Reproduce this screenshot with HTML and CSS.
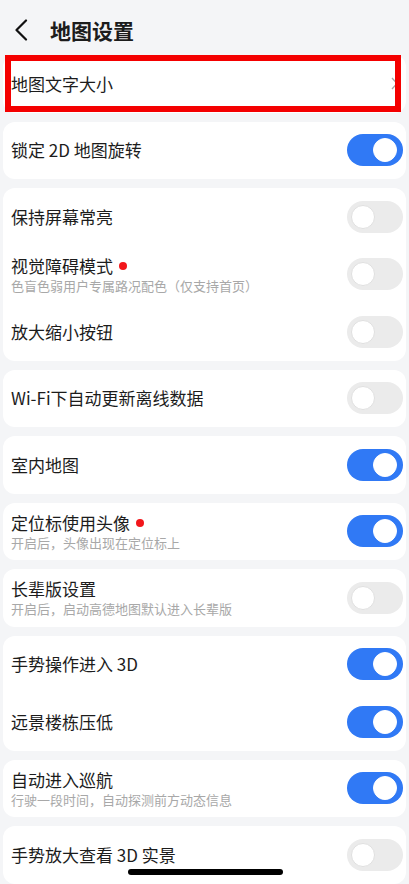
FILE: index.html
```html
<!DOCTYPE html>
<html lang="zh-CN">
<head>
    <meta charset="UTF-8">
    <meta name="viewport" content="width=device-width, initial-scale=1.0">
    <title>地图设置</title>
    <link rel="stylesheet" href="styles.css">
</head>
<body>

    <header class="topbar">
        <svg class="back" width="16" height="22" viewBox="0 0 16 22">
            <path d="M13 1.5 L3.5 11 L13 20.5" fill="none" stroke="#111" stroke-width="2.2" stroke-linecap="round" stroke-linejoin="round"/>
        </svg>
        <h1>地图设置</h1>
    </header>

    <div class="list">
        <div class="card marked">
            <div class="row">
                <span class="title">地图文字大小</span>
                <svg class="chevron" width="7" height="13" viewBox="0 0 7 13">
                    <path d="M1 1 L6 6.5 L1 12" fill="none" stroke="#a6a6a6" stroke-width="1.3"/>
                </svg>
            </div>
            <div class="mark"></div>
        </div>

        <div class="card">
            <div class="row">
                <span class="title">锁定 2D 地图旋转</span>
                <span class="switch on"></span>
            </div>
        </div>

        <div class="card">
            <div class="row">
                <span class="title">保持屏幕常亮</span>
                <span class="switch"></span>
            </div>
            <div class="row">
                <div class="text">
                    <span class="title">视觉障碍模式<i class="dot"></i></span>
                    <span class="sub">色盲色弱用户专属路况配色（仅支持首页）</span>
                </div>
                <span class="switch"></span>
            </div>
            <div class="row">
                <span class="title">放大缩小按钮</span>
                <span class="switch"></span>
            </div>
        </div>

        <div class="card">
            <div class="row">
                <span class="title">Wi-Fi下自动更新离线数据</span>
                <span class="switch"></span>
            </div>
        </div>

        <div class="card">
            <div class="row">
                <span class="title">室内地图</span>
                <span class="switch on"></span>
            </div>
        </div>

        <div class="card">
            <div class="row">
                <div class="text">
                    <span class="title">定位标使用头像<i class="dot"></i></span>
                    <span class="sub">开启后，头像出现在定位标上</span>
                </div>
                <span class="switch on"></span>
            </div>
        </div>

        <div class="card">
            <div class="row">
                <div class="text">
                    <span class="title">长辈版设置</span>
                    <span class="sub">开启后，启动高德地图默认进入长辈版</span>
                </div>
                <span class="switch"></span>
            </div>
        </div>

        <div class="card">
            <div class="row">
                <span class="title">手势操作进入 3D</span>
                <span class="switch on"></span>
            </div>
            <div class="row">
                <span class="title">远景楼栋压低</span>
                <span class="switch on"></span>
            </div>
        </div>

        <div class="card">
            <div class="row">
                <div class="text">
                    <span class="title">自动进入巡航</span>
                    <span class="sub">行驶一段时间，自动探测前方动态信息</span>
                </div>
                <span class="switch on"></span>
            </div>
        </div>

        <div class="card">
            <div class="row">
                <span class="title">手势放大查看 3D 实景</span>
                <span class="switch"></span>
            </div>
        </div>
    </div>

    <div class="home-bar"></div>

</body>
</html>
```

FILE: styles.css
```css
body {
    margin: 0;
    background-color: #f4f5f7;
    font-family: "Noto Sans CJK SC", "Noto Sans", sans-serif;
    color: #1c1c1c;
    height: 884px;
    overflow: hidden;
}
.topbar {
    height: 55px;
    display: flex;
    align-items: center;
    padding-left: 13px;
    box-sizing: border-box;
    padding-top: 4px;
}
.topbar h1 {
    margin: 0 0 0 21px;
    font-size: 21px;
    font-weight: 700;
    line-height: 28px;
}
.list {
    display: flex;
    flex-direction: column;
    gap: 9px;
}
.card {
    background: #fff;
    margin: 0 3px;
    border-radius: 12px;
}
.row {
    height: 57.5px;
    display: flex;
    align-items: center;
    justify-content: space-between;
    padding: 0 3px 0 8px;
}
.text {
    display: flex;
    flex-direction: column;
}
.title {
    font-size: 17px;
    line-height: 22px;
    display: flex;
    align-items: center;
}
.sub {
    font-size: 13px;
    line-height: 17px;
    color: #a8a8a8;
}
.dot {
    width: 8px;
    height: 8px;
    border-radius: 50%;
    background: #f2161b;
    margin-left: 6px;
}
.switch {
    width: 56px;
    height: 32px;
    border-radius: 16px;
    background: #ebebeb;
    position: relative;
    flex-shrink: 0;
}
.switch::after {
    content: "";
    position: absolute;
    top: 4px;
    left: 4px;
    width: 22px;
    height: 22px;
    border-radius: 50%;
    background: #fff;
    border: 1px solid #e0e0e0;
}
.switch.on {
    background: #3079f5;
}
.switch.on::after {
    left: auto;
    right: 6px;
    border-color: #fff;
}
.chevron {
    margin-right: 5px;
}
.marked {
    position: relative;
}
.mark {
    position: absolute;
    top: 0;
    left: 2px;
    width: 396px;
    height: 57px;
    box-sizing: border-box;
    border: 6px solid #f40000;
}
.home-bar {
    position: absolute;
    left: 128px;
    top: 869px;
    width: 155px;
    height: 6px;
    border-radius: 3px;
    background: #000;
}
```
